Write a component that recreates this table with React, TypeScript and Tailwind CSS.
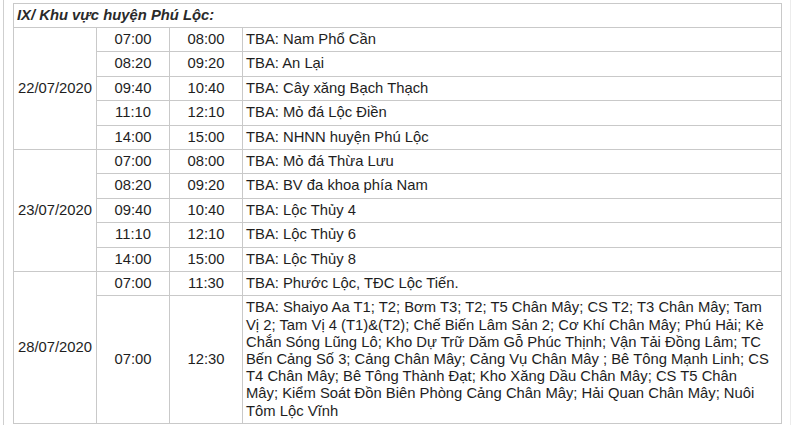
import React from 'react';

type Slot = { start: string; end: string; place: React.ReactNode };
type Day = { date: string; slots: Slot[] };

const days: Day[] = [
  {
    date: '22/07/2020',
    slots: [
      { start: '07:00', end: '08:00', place: 'TBA: Nam Phổ Cần' },
      { start: '08:20', end: '09:20', place: 'TBA: An Lại' },
      { start: '09:40', end: '10:40', place: 'TBA: Cây xăng Bạch Thạch' },
      { start: '11:10', end: '12:10', place: 'TBA: Mỏ đá Lộc Điền' },
      { start: '14:00', end: '15:00', place: 'TBA: NHNN huyện Phú Lộc' },
    ],
  },
  {
    date: '23/07/2020',
    slots: [
      { start: '07:00', end: '08:00', place: 'TBA: Mỏ đá Thừa Lưu' },
      { start: '08:20', end: '09:20', place: 'TBA: BV đa khoa phía Nam' },
      { start: '09:40', end: '10:40', place: 'TBA: Lộc Thủy 4' },
      { start: '11:10', end: '12:10', place: 'TBA: Lộc Thủy 6' },
      { start: '14:00', end: '15:00', place: 'TBA: Lộc Thủy 8' },
    ],
  },
  {
    date: '28/07/2020',
    slots: [
      { start: '07:00', end: '11:30', place: 'TBA: Phước Lộc, TĐC Lộc Tiến.' },
      {
        start: '07:00',
        end: '12:30',
        place: (
          <>
            TBA: Shaiyo Aa T1; T2; Bơm T3; T2; T5 Chân Mây; CS T2; T3 Chân Mây; Tam
            <br />
            Vị 2; Tam Vị 4 (T1)&amp;(T2); Chế Biến Lâm Sản 2; Cơ Khí Chân Mây; Phú Hải; Kè
            <br />
            Chắn Sóng Lũng Lô; Kho Dự Trữ Dăm Gỗ Phúc Thịnh; Vận Tải Đồng Lâm; TC
            <br />
            Bến Cảng Số 3; Cảng Chân Mây; Cảng Vụ Chân Mây ; Bê Tông Mạnh Linh; CS
            <br />
            T4 Chân Mây; Bê Tông Thành Đạt; Kho Xăng Dầu Chân Mây; CS T5 Chân
            <br />
            Mây; Kiểm Soát Đồn Biên Phòng Cảng Chân Mây; Hải Quan Chân Mây; Nuôi
            <br />
            Tôm Lộc Vĩnh
          </>
        ),
      },
    ],
  },
];

const cell = 'border border-[#c9c9c9] px-[3px] py-0 align-middle';

export default function App() {
  return (
    <div className="w-[800px] h-[425px] overflow-hidden bg-white">
      <div className="ml-[3px] w-[788px] h-[425px] border-l border-r border-l-[#cfcfcf] border-r-[#ececec] pl-[9px] pt-[3px]">
        <table
          className="w-[769px] border-collapse table-fixed text-[14.8px] leading-[17.2px] text-[#1e1e1e]"
          style={{ fontFamily: '"Liberation Sans", Arial, sans-serif' }}
        >
          <colgroup>
            <col className="w-[83px]" />
            <col className="w-[73px]" />
            <col className="w-[73px]" />
            <col />
          </colgroup>
          <tbody>
            <tr className="h-[24px]">
              <td colSpan={4} className={`${cell} font-bold italic text-[#2a2a2a]`}>
                IX/ Khu vực huyện Phú Lộc:
              </td>
            </tr>
            {days.map((day) =>
              day.slots.map((slot, i) => (
                <tr key={day.date + i} className={typeof slot.place === 'string' ? 'h-[24.4px]' : ''}>
                  {i === 0 && (
                    <td rowSpan={day.slots.length} className={`${cell} text-center`}>
                      {day.date}
                    </td>
                  )}
                  <td className={`${cell} text-center`}>{slot.start}</td>
                  <td className={`${cell} text-center`}>{slot.end}</td>
                  <td className={`${cell} ${typeof slot.place === 'string' ? '' : 'pt-[3px] pb-[3px]'}`}>
                    {slot.place}
                  </td>
                </tr>
              ))
            )}
          </tbody>
        </table>
      </div>
    </div>
  );
}
